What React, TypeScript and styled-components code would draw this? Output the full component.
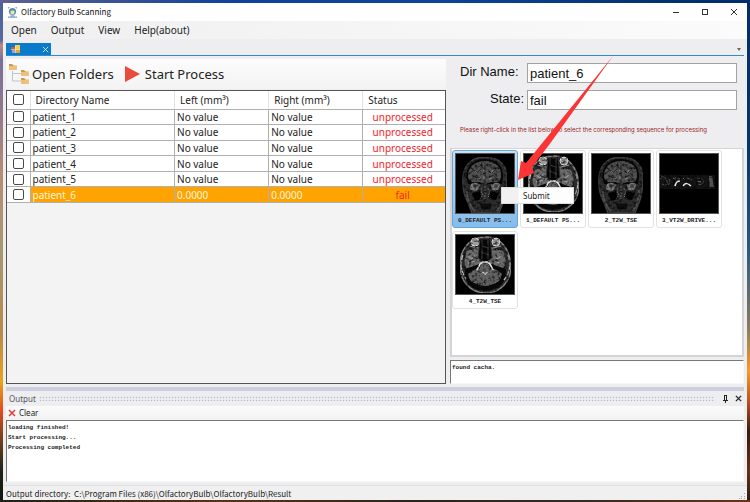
import React from "react";
import styled, { createGlobalStyle } from "styled-components";

const ui = `"Noto Sans", "Open Sans", sans-serif`;
const compact = `"Noto Sans CJK SC", "Noto Sans", sans-serif`;
const mono = `"Liberation Mono", monospace`;
const arial = `"Liberation Sans", sans-serif`;

const GlobalStyle = createGlobalStyle`
  *, *::before, *::after { box-sizing: border-box; }
  body { margin: 0; font-family: ${ui}; color: #222; }
  button, input, textarea { font: inherit; color: inherit; margin: 0; padding: 0; }
  button { border: 0; background: none; white-space: nowrap; }
  svg { display: block; flex: none; }
`;

const Desktop = styled.div`
  min-height: 100vh;
  display: flex;
  padding: 3px 3px 2px;
  background:
    linear-gradient(90deg, #5e6290 0, #12429a 30%, #0b4496 60%, #02306e 90%, #002f6c 100%) top / 100% 3px no-repeat,
    linear-gradient(90deg, #222016, #5b3214 30%, #2c241c 55%, #3a2a20 80%, #6a3315) bottom / 100% 2px no-repeat,
    linear-gradient(180deg, #45619b 0, #5a69a0 8%, #b98a87 9%, #786f98 12%, #8c7590 20%, #b98c74 35%, #a59873 50%, #b98a48 66%, #e8a21e 76%, #e2491c 82%, #7a421c 87%, #1c2318 94%, #10180f 100%) left / 50% 100% no-repeat,
    linear-gradient(180deg, #022f6c 0, #04366f 30%, #285b80 50%, #8a7960 65%, #f39a2c 74%, #b85322 80%, #3c1a10 86%, #6a3014 94%, #2a1a12 100%) right / 50% 100% no-repeat;
`;

const Window = styled.main`
  flex: 1;
  min-width: 0;
  display: flex;
  flex-direction: column;
  background: #eeeef0;
`;

const TitleBar = styled.header`
  display: flex;
  align-items: center;
  gap: 4px;
  height: 18px;
  padding: 0 8px 0 5px;
  background: #fff;
`;

const Title = styled.h1`
  flex: 1;
  margin: 0;
  font-size: 8px;
  font-weight: 400;
  font-family: ${compact};
  line-height: 18px;
  color: #111;
`;

const WindowButtons = styled.div`
  display: flex;
  gap: 19px;
`;

const IconButton = styled.button`
  display: grid;
  place-items: center;
  width: 10px;
  height: 10px;
`;

const MenuBar = styled.nav`
  display: flex;
  gap: 14px;
  height: 18px;
  padding-left: 8px;
  background: linear-gradient(90deg, #efeff0, #fbfbfb);
`;

const MenuItem = styled.button`
  font-size: 10px;
  line-height: 18px;
`;

const TabStrip = styled.div`
  display: flex;
  align-items: end;
  justify-content: space-between;
  height: 17px;
  margin: 0 3px;
  padding-top: 3px;
  border-bottom: 1px solid #2f8ccf;
`;

const Tab = styled.div`
  display: flex;
  align-items: center;
  justify-content: space-between;
  width: 45px;
  height: 12px;
  padding: 0 1px 0 5px;
  background: #0a7bcb;
`;

const Workspace = styled.div`
  flex: 1;
  display: grid;
  grid-template-columns: minmax(0, 440fr) minmax(0, 294fr);
  gap: 4px;
  margin: 3px 3px 3px;
`;

const LeftPane = styled.section`
  display: flex;
  flex-direction: column;
  min-width: 0;
`;

const Toolbar = styled.div`
  display: flex;
  align-items: center;
  gap: 10px;
  height: 30px;
  padding-left: 3px;
  margin-bottom: 1px;
  background: linear-gradient(180deg, #fcfcfc, #f3f3f3);
`;

const ToolButton = styled.button`
  display: flex;
  align-items: center;
  gap: 3px;
  font-size: 13px;
  line-height: 18px;
`;

const GridFrame = styled.div`
  flex: 1;
  border: 1px solid #555;
  background: #f3f3f3;
`;

const PatientTable = styled.table`
  width: 100%;
  height: 112px;
  table-layout: fixed;
  border-collapse: collapse;
  background: #fff;
  font-size: 10px;
  line-height: 14px;
`;

const Col = styled.col<{ $w: string }>`
  width: ${(p) => p.$w};
`;

const Row = styled.tr<{ $selected?: boolean }>`
  & > td + td {
    background: ${(p) => (p.$selected ? "#ffa300" : "#fff")};
    color: ${(p) => (p.$selected ? "#fff6df" : "#222")};
  }
`;

const HeadCell = styled.th`
  height: 18px;
  padding: 0 0 0 5px;
  font-weight: 400;
  text-align: left;
  border-bottom: 1px solid #b0b0b0;
  border-right: 1px solid #e2e2e2;
  &:last-child { border-right: 0; }
`;

const Cell = styled.td`
  padding: 0 0 0 2px;
  border-bottom: 1px solid #b0b0b0;
  border-right: 1px solid #b0b0b0;
  &:last-child { border-right: 0; }
`;

const CheckCell = styled(Cell)`
  padding-left: 6px;
`;

const CheckHead = styled(HeadCell)`
  padding-left: 6px;
`;

const StatusCell = styled(Cell)`
  padding: 0 3px 0 0;
  text-align: center;
  && { color: #f5222a; }
`;

const Check = styled.input`
  appearance: none;
  display: block;
  width: 11px;
  height: 11px;
  border: 1px solid #4a4a4a;
  border-radius: 2px;
  background: #fff;
`;

const RightPane = styled.section`
  display: flex;
  flex-direction: column;
  min-width: 0;
  position: relative;
`;

const Form = styled.div`
  display: grid;
  grid-template-columns: 64px 1fr;
  column-gap: 3px;
  row-gap: 7px;
  padding: 4px 7px 0 10px;
  font-family: ${arial};
  font-size: 13px;
  color: #111;
`;

const Label = styled.label<{ $align?: string }>`
  text-align: ${(p) => p.$align ?? "left"};
  line-height: 18px;
`;

const Field = styled.input`
  width: 100%;
  height: 20px;
  padding-left: 2px;
  border: 1px solid #a2a2a2;
  background: #fff;
`;

const Hint = styled.p`
  margin: 16px 0 14px 10px;
  font-family: Inter, sans-serif;
  font-size: 6px;
  line-height: 8px;
  white-space: nowrap;
  color: #922;
`;

const ScanList = styled.div`
  flex: 1;
  display: flex;
  flex-wrap: wrap;
  align-content: start;
  gap: 3px 2px;
  padding-top: 1px;
  border: 2px solid #d4d4d6;
  border-top-width: 1px;
  background: #fff;
`;

const ScanCard = styled.figure<{ $selected?: boolean }>`
  width: 66px;
  margin: 0;
  padding: 2px;
  border: 1px solid ${(p) => (p.$selected ? "#6aa5d2" : "#e2e2e2")};
  border-radius: 3px;
  background: ${(p) => (p.$selected ? "linear-gradient(180deg, #c6e0f5, #84bced)" : "#fff")};
`;

const ScanName = styled.figcaption`
  height: 11px;
  font-family: ${mono};
  font-size: 6px;
  font-weight: 700;
  line-height: 13px;
  text-align: center;
  white-space: nowrap;
`;

const Log = styled.textarea<{ $h: number }>`
  display: block;
  width: 100%;
  height: ${(p) => p.$h}px;
  resize: none;
  outline: 0;
  border: 1px solid #f8f8f8;
  border-top-color: #777;
  border-left-color: #777;
  background: #fff;
  font-family: ${mono};
  font-size: 6px;
  font-weight: 700;
  line-height: 10px;
  padding: 2px 0 0 1px;
`;

const LogWrap = styled.div`
  margin-top: 3px;
`;

const ContextMenu = styled.div`
  position: absolute;
  left: 51px;
  top: 128px;
  display: flex;
  width: 73px;
  height: 17px;
  border: 1px solid #ddd;
  background: linear-gradient(90deg, #f1f1f1 0 16px, #fdfdfd 17px);
`;

const ContextItem = styled.button`
  flex: 1;
  padding-left: 21px;
  text-align: left;
  font-size: 8px;
  line-height: 15px;
`;

const Arrow = styled.svg`
  position: absolute;
  left: 66px;
  top: -4px;
  pointer-events: none;
`;

const OutputPane = styled.section`
  margin: 0 3px;
  border-top: 4px solid #cdcedd;
`;

const OutputHead = styled.div`
  display: flex;
  align-items: center;
  gap: 3px;
  height: 15px;
  padding: 0 1px 0 3px;
`;

const OutputTitle = styled.h2`
  margin: 0;
  font-size: 8px;
  font-weight: 400;
  color: #555;
`;

const Grip = styled.div`
  flex: 1;
  height: 5px;
  margin-right: 2px;
  background:
    radial-gradient(circle, #b9b9c2 0 30%, transparent 50%) 0 0 / 3px 3px,
    #eeeef0;
`;

const OutputTools = styled.div`
  display: flex;
  height: 14px;
  padding-left: 2px;
  background: linear-gradient(180deg, #fbfbfb, #f2f2f2);
`;

const ClearButton = styled.button`
  display: flex;
  align-items: center;
  gap: 3px;
  font-size: 8px;
  line-height: 12px;
`;

const StatusBar = styled.footer`
  display: flex;
  align-items: end;
  justify-content: space-between;
  height: 15px;
  margin-top: 3px;
  padding: 0 1px 0 3px;
  border-top: 1px solid #e0e0e2;
  background: #f0f0f0;
  font-family: ${compact};
  font-size: 8px;
  line-height: 13px;
  white-space: pre;
`;

const AppIcon = () => (
  <svg width="9" height="11" viewBox="0 0 9 11">
    <path d="M0 2V0H2M7 0H9V2M9 9V11H7M2 11H0V9" fill="none" stroke="#6f9cc4" />
    <circle cx="4.5" cy="4.5" r="3.6" fill="#4e8ec4" />
    <ellipse cx="4.5" cy="5" rx="2.1" ry="2.5" fill="#f3e2a4" />
    <path d="M2.3 3.8Q4.5 1.3 6.7 3.8L5 3.3Z" fill="#3a5878" />
    <path d="M1 11Q1.5 8 4.5 8T8 11Z" fill="#8fb4d6" />
  </svg>
);

const FormIcon = () => (
  <svg width="10" height="9" viewBox="0 0 10 9">
    <rect x="0" y="2" width="4" height="3" fill="#d0574c" />
    <rect x="4" y="0" width="5" height="5" fill="#fbd04a" />
    <rect x="1" y="5" width="3" height="3" fill="#7fa8ee" />
    <rect x="4" y="5" width="5" height="3" fill="#e9a42e" />
    <path d="M0 4.5H9M4.5 1V8" stroke="#f3e9c8" strokeWidth="0.6" />
  </svg>
);

const Folder = ({ x, y }: { x: number; y: number }) => (
  <g transform={`translate(${x} ${y})`}>
    <path d="M0 0H3L4 1H7.5V6H0Z" fill="#c99a4c" />
    <path d="M0 2H7.5V6H0Z" fill="#eec07a" />
    <path d="M4.5 1.5H7.5" stroke="#fff" strokeWidth="0.6" />
  </g>
);

const TreeIcon = () => (
  <svg width="20" height="20" viewBox="0 0 20 20">
    <path d="M3.5 7V17H12M3.5 9.5H12" fill="none" stroke="#b9c6d2" />
    <Folder x={0} y={0} />
    <Folder x={12} y={6} />
    <Folder x={12} y={14} />
  </svg>
);

const Cross = ({ size = 7, color = "#333", width = 1 }: { size?: number; color?: string; width?: number }) => (
  <svg width={size} height={size} viewBox="0 0 8 8">
    <path d="M1 1L7 7M7 1L1 7" stroke={color} strokeWidth={width} fill="none" />
  </svg>
);

const Coronal = () => (
  <g>
    <path d="M30 4C45 4 52 13 52 25C52 33 51 42 48 50L44 60H17L13 50C9 42 7 34 8 26C8 13 16 4 30 4Z" fill="#292929" stroke="#3c3c3c" strokeWidth="1.4" />
    <path d="M30 6C43 6 48 14 48 24L47 31H13L11 24C11 14 17 6 30 6Z" fill="#070707" />
    <path d="M30 8C41 8 47 15 46 23C46 29 41 30 36 29L30 31L24 29C18 30 13 29 13 23C13 15 19 8 30 8Z" fill="#4a4a4a" />
    <path d="M30 8V29M16 19L20 17L22 20L26 16M17 24L22 22L25 26M20 12L24 14L27 11M34 11L36 15L40 13M33 18L37 20L40 17L44 20M34 25L38 22L42 26" fill="none" stroke="#2b2b2b" strokeWidth="1" />
    <path d="M29 16V26M20 18L22 20M38 17L36 20M24 26L26 25M34 26L37 25" stroke="#8a8a8a" strokeWidth="0.9" />
    <path d="M16 31Q20 28 25 32L23 37Q19 39 15 36ZM36 32Q41 28 45 31L44 36Q41 39 37 37Z" fill="#707070" />
    <circle cx="20" cy="33" r="2" fill="#3c3c3c" /><circle cx="41" cy="33" r="2" fill="#3c3c3c" />
    <path d="M17 40L25 38L27 46L20 48ZM35 38L44 40L41 47L34 46Z" fill="#020202" />
    <path d="M30 33V46M27 35L26 39L28 42L25 46M33 35L35 39L33 43L36 46" fill="none" stroke="#6a6a6a" strokeWidth="1" strokeDasharray="2 1" />
    <path d="M24 50H37L36 57H26Z" fill="#0d0d0d" stroke="#2c2c2c" />
    <path d="M12 37Q11 49 20 58M48 37Q48 49 42 58" fill="none" stroke="#484848" strokeWidth="2" />
  </g>
);

const Axial = () => (
  <g>
    <path d="M30 3C44 2 55 14 56 32C56 48 45 59 31 59C16 59 5 48 5 31C5 15 15 3 30 3Z" fill="#282828" stroke="#777" strokeWidth="1.5" />
    <path d="M12 17L24 13L26 29L12 35Q7 28 12 17ZM48 17L36 13L34 29L48 35Q53 28 48 17Z" fill="#626262" />
    <path d="M10 35L25 30L30 27L36 30L51 35Q52 49 42 54Q30 60 18 54Q8 48 10 35Z" fill="#080808" />
    <path d="M13 40Q22 32 30 35Q39 32 47 40Q46 48 38 50Q30 54 22 50Q14 48 13 40Z" fill="#5c5c5c" />
    <path d="M25 5H35L37 24L30 29L23 24Z" fill="#060606" stroke="#333" />
    <path d="M27 6V25M33 6V25M26 12L34 14M26 18L34 21" stroke="#3a3a3a" />
    <circle cx="20" cy="8" r="4" fill="#909090" stroke="#ccc" /><circle cx="41" cy="8" r="4" fill="#909090" stroke="#ccc" />
    <path d="M14 12L23 14M46 12L38 14" stroke="#888" />
    <path d="M22 36L25 30Q30 26 35 30L38 36" fill="none" stroke="#d0d0d0" strokeWidth="1.7" />
    <circle cx="30" cy="34" r="5" fill="#5c5c5c" /><path d="M27 38H33L30 41Z" fill="#eee" />
    <path d="M13 22L17 25L20 21M13 29L20 27M39 20L42 25L46 22M39 27L47 30" fill="none" stroke="#a2a2a2" strokeWidth="0.8" />
    <path d="M18 42Q24 45 28 43M33 43Q38 45 43 41M18 45Q24 49 28 46M33 46Q38 49 42 45M30 44V51" fill="none" stroke="#444" strokeWidth="0.8" />
    <path d="M8 21Q3 33 11 45M53 21Q58 34 49 46" fill="none" stroke="#aaa" strokeWidth="1.4" strokeDasharray="5 2 8 1" />
  </g>
);

const Slab = () => (
  <g>
    <rect x="0" y="22" width="56" height="14" fill="#121212" />
    <path d="M50 23H53L55 34H50Z" fill="#4a4a4a" />
    <path d="M1 26Q6 22 8 28T3 31M10 26Q12 29 9 32M28 25L33 27M38 26Q42 24 45 28Q43 33 39 31M21 26L16 25" fill="none" stroke="#4a4a4a" strokeDasharray="3 1" />
    <path d="M16 33Q17 28 21 28M24 33Q27 28 32 33" fill="none" stroke="#dcdcdc" strokeWidth="1.6" />
    <path d="M2 23L5 24M14 25L17 27M24 25L26 27M38 28L42 29" stroke="#6a6a6a" />
  </g>
);

const drawings = { coronal: Coronal, axial: Axial, slab: Slab };

const ScanImage = ({ kind, id }: { kind: keyof typeof drawings; id: string }) => {
  const Drawing = drawings[kind];
  return (
    <svg width="60" height="61" viewBox="0 0 60 61">
      <filter id={id} x="0" y="0" width="100%" height="100%" colorInterpolationFilters="sRGB">
        <feGaussianBlur in="SourceGraphic" stdDeviation="0.4" result="soft" />
        <feTurbulence type="fractalNoise" baseFrequency="0.35" numOctaves="2" seed="4" />
        <feColorMatrix values="2.4 0 0 0 -0.3  2.4 0 0 0 -0.3  2.4 0 0 0 -0.3  0 0 0 0 1" result="grain" />
        <feComposite in="soft" in2="grain" operator="arithmetic" k1="1" k2="0.1" k3="0" k4="0" />
      </filter>
      <rect width="60" height="61" fill="#000" />
      <g filter={`url(#${id})`}><Drawing /></g>
      <rect x="0.5" y="0.5" width="59" height="60" fill="none" stroke="#555" />
    </svg>
  );
};

const scans: { name: string; kind: keyof typeof drawings }[] = [
  { name: "0_DEFAULT PS...", kind: "coronal" },
  { name: "1_DEFAULT PS...", kind: "axial" },
  { name: "2_T2W_TSE", kind: "coronal" },
  { name: "3_VT2W_DRIVE...", kind: "slab" },
  { name: "4_T2W_TSE", kind: "axial" },
];

const patients = [1, 2, 3, 4, 5, 6].map((n) => ({
  name: `patient_${n}`,
  value: n === 6 ? "0.0000" : "No value",
  status: n === 6 ? "fail" : "unprocessed",
}));

export default function App() {
  return (
    <Desktop>
      <GlobalStyle />
      <Window>
        <TitleBar>
          <AppIcon />
          <Title>Olfactory Bulb Scanning</Title>
          <WindowButtons>
            <IconButton aria-label="Minimize">
              <svg width="8" height="8"><path d="M1 4.5H7" stroke="#333" /></svg>
            </IconButton>
            <IconButton aria-label="Maximize">
              <svg width="8" height="8"><rect x="1.5" y="1.5" width="5" height="5" fill="none" stroke="#333" /></svg>
            </IconButton>
            <IconButton aria-label="Close"><Cross size={8} /></IconButton>
          </WindowButtons>
        </TitleBar>
        <MenuBar>
          {["Open", "Output", "View", "Help(about)"].map((m) => <MenuItem key={m}>{m}</MenuItem>)}
        </MenuBar>
        <TabStrip>
          <Tab>
            <FormIcon />
            <IconButton aria-label="Close tab"><Cross size={7} color="#d8edff" /></IconButton>
          </Tab>
          <IconButton aria-label="Tab list">
            <svg width="6" height="4"><path d="M1 0H5L3 3Z" fill="#666" /></svg>
          </IconButton>
        </TabStrip>
        <Workspace>
          <LeftPane>
            <Toolbar>
              <ToolButton><TreeIcon />Open Folders</ToolButton>
              <ToolButton>
                <svg width="18" height="18"><path d="M1 1L16 9L1 17Z" fill="#ea4a3b" /></svg>
                Start Process
              </ToolButton>
            </Toolbar>
            <GridFrame>
              <PatientTable>
                <colgroup>
                  <Col $w="23px" /><Col $w="33%" /><Col $w="21.5%" /><Col $w="21.5%" /><Col $w="auto" />
                </colgroup>
                <thead>
                  <tr>
                    <CheckHead><Check type="checkbox" aria-label="Select all" /></CheckHead>
                    <HeadCell>Directory Name</HeadCell>
                    <HeadCell>Left (mm³)</HeadCell>
                    <HeadCell>Right (mm³)</HeadCell>
                    <HeadCell>Status</HeadCell>
                  </tr>
                </thead>
                <tbody>
                  {patients.map((p) => (
                    <Row key={p.name} $selected={p.status === "fail"}>
                      <CheckCell><Check type="checkbox" aria-label={p.name} /></CheckCell>
                      <Cell>{p.name}</Cell>
                      <Cell>{p.value}</Cell>
                      <Cell>{p.value}</Cell>
                      <StatusCell>{p.status}</StatusCell>
                    </Row>
                  ))}
                </tbody>
              </PatientTable>
            </GridFrame>
          </LeftPane>
          <RightPane>
            <Form>
              <Label htmlFor="dir">Dir Name:</Label>
              <Field id="dir" defaultValue="patient_6" />
              <Label htmlFor="state" $align="right">State:</Label>
              <Field id="state" defaultValue="fail" />
            </Form>
            <Hint>Please right-click in the list below to select the corresponding sequence for processing</Hint>
            <ScanList>
              {scans.map((s, i) => (
                <ScanCard key={s.name} $selected={i === 0}>
                  <ScanImage kind={s.kind} id={`scan${i}`} />
                  <ScanName>{s.name}</ScanName>
                </ScanCard>
              ))}
            </ScanList>
            <LogWrap><Log $h={24} aria-label="Messages" defaultValue="found cacha." /></LogWrap>
            <ContextMenu role="menu"><ContextItem role="menuitem">Submit</ContextItem></ContextMenu>
            <Arrow width="98" height="126" viewBox="0 0 98 126">
              <path d="M97 1L10 108L5 106L2 125L18 118L16 112L33 90Z" fill="#fb3535" />
            </Arrow>
          </RightPane>
        </Workspace>
        <OutputPane>
          <OutputHead>
            <OutputTitle>Output</OutputTitle>
            <Grip />
            <IconButton aria-label="Pin">
              <svg width="7" height="8"><path d="M2 .5H5M2.5 .5V5M4.5 .5V5M1 5.5H6M3.5 5.5V8" stroke="#222" fill="none" /></svg>
            </IconButton>
            <IconButton aria-label="Close output"><Cross color="#222" width={1.5} /></IconButton>
          </OutputHead>
          <OutputTools>
            <ClearButton><Cross size={8} color="#ee3535" width={1.5} />Clear</ClearButton>
          </OutputTools>
          <Log $h={62} aria-label="Output" defaultValue={"loading finished!\nStart processing...\nProcessing completed"} />
        </OutputPane>
        <StatusBar>
          <span>{"Output directory:  C:\\Program Files (x86)\\OlfactoryBulb\\OlfactoryBulb\\Result"}</span>
          <svg width="7" height="7">
            <path d="M5 0h1v1H5zM2 3h1v1H2zM5 3h1v1H5zM0 5h1v1H0zM2 5h1v1H2zM5 5h1v1H5z" fill="#aaa" />
          </svg>
        </StatusBar>
      </Window>
    </Desktop>
  );
}
